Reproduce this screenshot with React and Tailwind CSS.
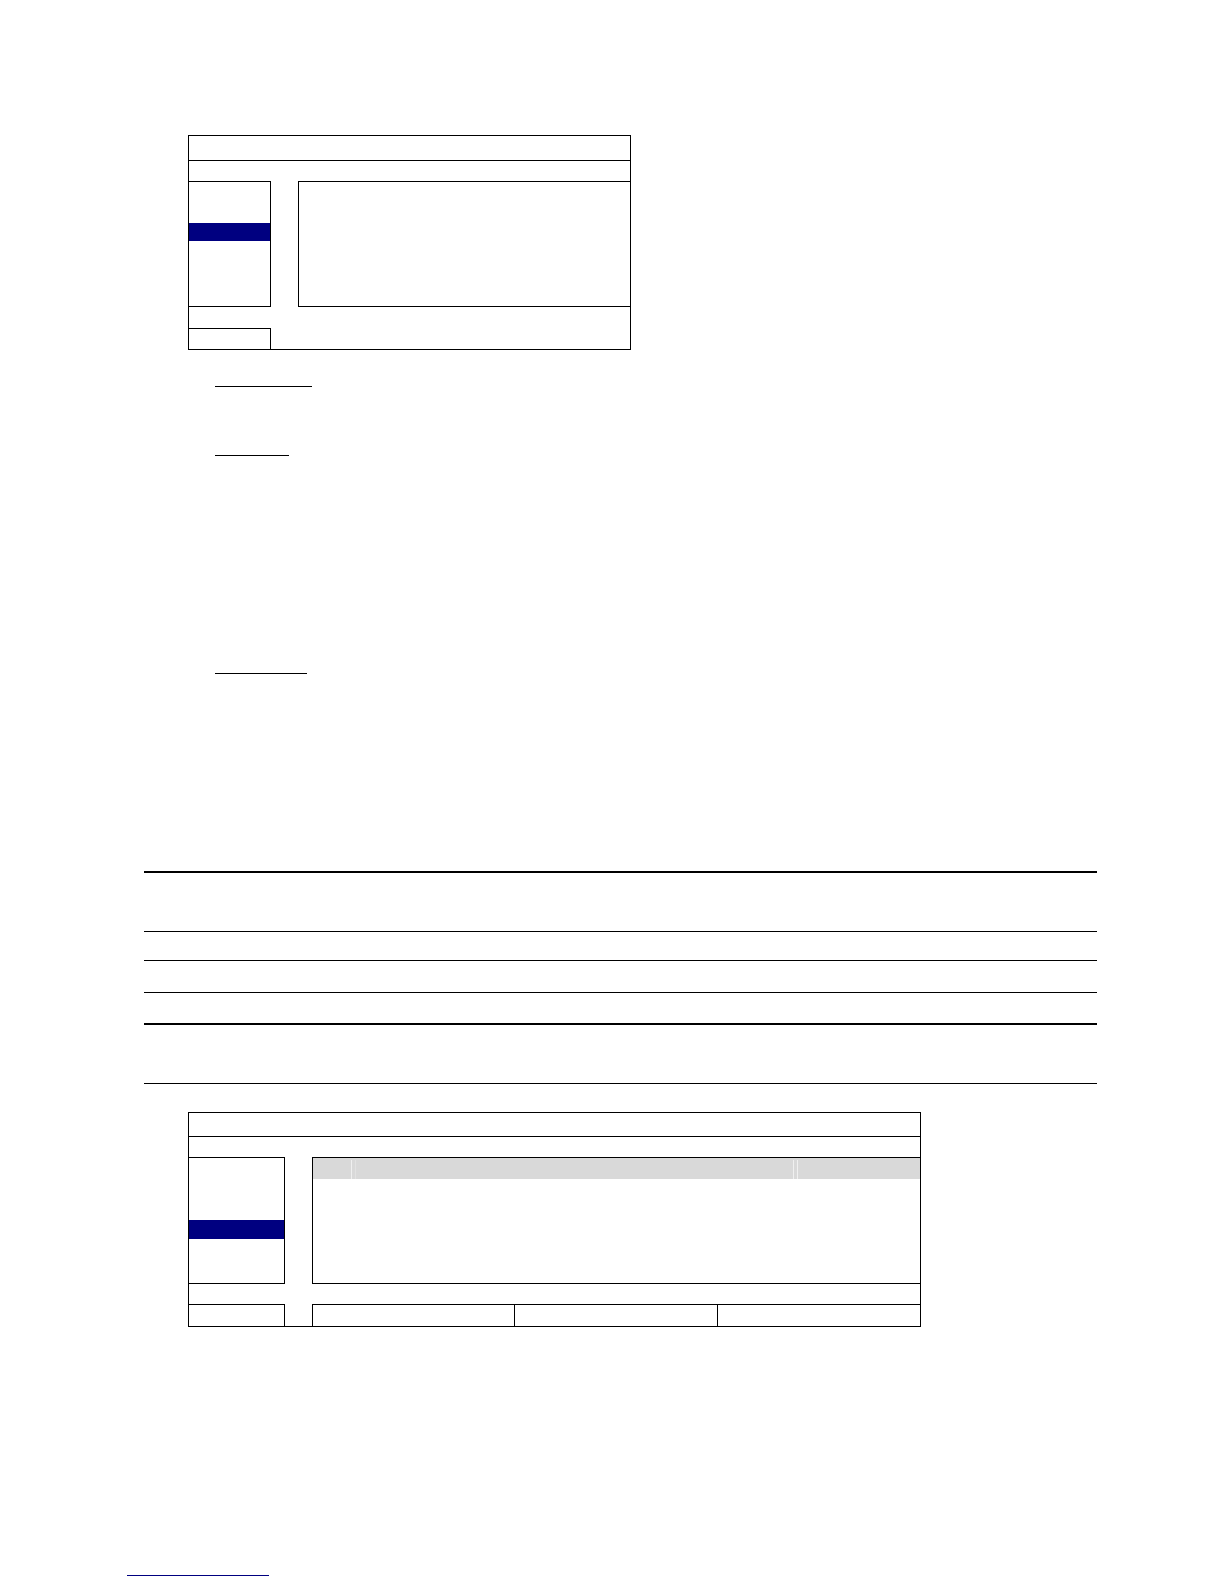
import React from "react";
import clsx from "clsx";

const MenuFrame = ({ className, children }) => (
  <section className={clsx("ml-[188px] max-w-full border border-black", className)}>
    {children}
  </section>
);

const SideMenu = ({ className, children }) => (
  <nav className={clsx("shrink-0 border-y border-r border-black", className)}>
    {children}
  </nav>
);

const Term = ({ className }) => (
  <div className={clsx("ml-[215px] border-b border-black", className)} />
);

const RecordingMenu = () => (
  <MenuFrame className="mt-[135px] w-[443px]">
    <header className="h-[25px] border-b border-black" />
    <div className="mt-5 flex h-[126px] gap-[27px]">
      <SideMenu className="w-[82px] pt-[41px]">
        <div className="h-[18px] bg-[#000080]" />
      </SideMenu>
      <div className="flex-1 border-y border-l border-black" />
    </div>
    <footer className="mt-[21px] flex h-[21px]">
      <div className="w-[82px] border-t border-r border-black" />
    </footer>
  </MenuFrame>
);

const NotesTable = () => (
  <div className="mt-[197px] mr-[127px] ml-36 border-b border-black">
    <div className="h-[60px] border-t-2 border-black" />
    <div className="h-[29px] border-t border-black" />
    <div className="h-8 border-t border-black" />
    <div className="h-[31px] border-t border-black" />
    <div className="h-[60px] border-t-2 border-black" />
  </div>
);

const ListMenu = () => (
  <MenuFrame className="mt-7 w-[733px]">
    <header className="h-6 border-b border-black" />
    <div className="mt-5 flex h-[127px] gap-[27px]">
      <SideMenu className="w-24 pt-[62px]">
        <div className="h-[19px] bg-[#000080]" />
      </SideMenu>
      <div className="flex-1 border-y border-l border-black">
        {/* Column headings */}
        <div className="flex h-[21px] bg-[#d9d9d9] pt-0.5">
          <div className="w-[38px]" />
          <div className="w-[5px] border-x border-l-[#f0f0f0] border-r-[#e2e2e2]" />
          <div className="flex-1" />
          <div className="w-[5px] border-x border-[#f0f0f0]" />
          <div className="w-[122px]" />
        </div>
      </div>
    </div>
    <footer className="mt-5 flex h-[22px] gap-[27px]">
      <div className="w-24 border-t border-r border-black" />
      <div className="flex flex-1 border-t border-black">
        <div className="w-[202px] border-l border-black" />
        <div className="flex-1 border-l border-black" />
        <div className="flex-1 border-l border-black" />
      </div>
    </footer>
  </MenuFrame>
);

const App = () => {
  return (
    <main className="flex min-h-screen flex-col bg-white pb-2">
      <RecordingMenu />
      <Term className="h-[37px] w-[97px]" />
      <Term className="h-[69px] w-[74px]" />
      <Term className="h-[218px] w-[92px]" />
      <NotesTable />
      <ListMenu />
      <a
        href="#top"
        aria-label="Back to contents"
        className="mt-[225px] ml-[127px] h-6 w-[142px] border-b border-[#000080]"
      />
    </main>
  );
};

export default App;
